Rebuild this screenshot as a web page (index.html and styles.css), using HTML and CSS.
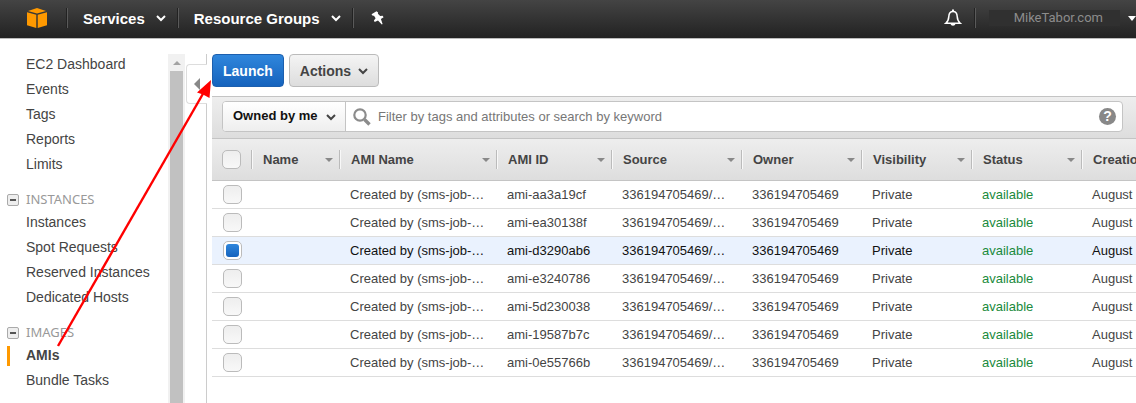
FILE: index.html
```
<!DOCTYPE html>
<html lang="en">
<head>
    <meta charset="UTF-8">
    <meta name="viewport" content="width=device-width, initial-scale=1.0">
    <title>EC2 Management Console</title>
    <link rel="stylesheet" href="styles.css">
</head>
<body>
    <svg class="sprites" aria-hidden="true">
        <symbol id="chevron" viewBox="0 0 10 8">
            <path d="M1 2l4 4 4-4" fill="none" stroke="currentColor" stroke-width="2"/>
        </symbol>
    </svg>

    <!-- Top navigation -->
    <header class="topbar">
        <a href="#" class="logo" aria-label="Home">
            <svg width="20" height="20" viewBox="0 0 20 20">
                <g fill="#f90">
                    <path d="M10 0l9 3-9 2.400L1 3z"/>
                    <path d="M0 4.200l9.300 2.500V20L0 17.300z"/>
                    <path d="M20 4.200l-9.300 2.500V20l9.300-2.700z"/>
                </g>
            </svg>
        </a>
        <button class="nav-btn">Services <svg class="chevron"><use href="#chevron"/></svg></button>
        <button class="nav-btn">Resource Groups <svg class="chevron"><use href="#chevron"/></svg></button>
        <button class="nav-btn nav-pin" aria-label="Pin">
            <svg width="14" height="14" viewBox="0 0 14 14">
                <path d="M5.500.3L.5 3.300l1.200 1.500 1.300-.1 1.600 2.500-1.700 2.200.8 1.500 3.300-1.500 3.800 4 .8-.4-1.700-4.900 2.700-1.800-1-1.500-2.400.2-2.300-2.300.2-1.300z" fill="#fff"/>
            </svg>
        </button>
        <div class="nav-right">
            <button class="bell" aria-label="Notifications">
                <svg width="18" height="18" viewBox="0 0 18 18">
                    <path d="M9 2.500C5.800 2.500 4.900 5 4.800 7.600 4.700 10.800 3.600 12.600 1.800 14.200H16.200C14.400 12.600 13.300 10.800 13.200 7.600 13.100 5 12.200 2.500 9 2.500z" fill="none" stroke="#fff" stroke-width="1.500"/>
                    <path d="M8 .6h2v2H8zM6.500 14.500h5c-.3 3-4.700 3-5 0z" fill="#fff"/>
                </svg>
            </button>
            <button class="account"><span class="account-name">MikeTabor.com</span><span class="caret"></span></button>
        </div>
    </header>

    <div class="page">
        <!-- Sidebar -->
        <nav class="sidebar">
            <ul class="menu">
                <li><a href="#">EC2 Dashboard</a></li>
                <li><a href="#">Events</a></li>
                <li><a href="#">Tags</a></li>
                <li><a href="#">Reports</a></li>
                <li><a href="#">Limits</a></li>
            </ul>
            <h2 class="menu-title"><button class="toggle" aria-label="Collapse instances"></button>INSTANCES</h2>
            <ul class="menu">
                <li><a href="#">Instances</a></li>
                <li><a href="#">Spot Requests</a></li>
                <li><a href="#">Reserved Instances</a></li>
                <li><a href="#">Dedicated Hosts</a></li>
            </ul>
            <h2 class="menu-title"><button class="toggle" aria-label="Collapse images"></button>IMAGES</h2>
            <ul class="menu">
                <li class="active"><a href="#">AMIs</a></li>
                <li><a href="#">Bundle Tasks</a></li>
            </ul>
        </nav>
        <div class="scrollbar"><span class="scroll-up"></span><span class="scroll-thumb"></span></div>
        <div class="splitter"><button class="collapse" aria-label="Hide sidebar"></button></div>

        <main class="content">
            <div class="actions">
                <button class="btn btn-primary">Launch</button>
                <button class="btn">Actions <svg class="chevron"><use href="#chevron"/></svg></button>
            </div>

            <div class="filter-bar">
                <div class="filter">
                    <div class="owner">
                        <select aria-label="Owner filter">
                            <option>Owned by me</option>
                        </select>
                        <svg class="chevron"><use href="#chevron"/></svg>
                    </div>
                    <label class="search">
                        <svg width="18" height="18" viewBox="0 0 18 18" fill="none" stroke="#8c8c8c">
                            <circle cx="7" cy="7" r="5.700" stroke-width="2.200"/>
                            <path d="M11.500 11.500l5 5" stroke-width="3.400"/>
                        </svg>
                        <input type="text" aria-label="Filter" placeholder="Filter by tags and attributes or search by keyword">
                    </label>
                    <button class="help" aria-label="Help">?</button>
                </div>
            </div>

            <table class="ami-table">
                <colgroup>
                    <col class="col-check">
                    <col class="col-name">
                    <col class="col-ami">
                    <col class="col-id">
                    <col class="col-source">
                    <col class="col-owner">
                    <col class="col-visibility">
                    <col class="col-status">
                    <col>
                </colgroup>
                <thead>
                    <tr>
                        <th><input type="checkbox" aria-label="Select all"></th>
                        <th><div class="th">Name<span class="sort"></span></div></th>
                        <th><div class="th">AMI Name<span class="sort"></span></div></th>
                        <th><div class="th">AMI ID<span class="sort"></span></div></th>
                        <th><div class="th">Source<span class="sort"></span></div></th>
                        <th><div class="th">Owner<span class="sort"></span></div></th>
                        <th><div class="th">Visibility<span class="sort"></span></div></th>
                        <th><div class="th">Status<span class="sort"></span></div></th>
                        <th><div class="th">Creation</div></th>
                    </tr>
                </thead>
                <tbody>
                    <tr>
                        <td><input type="checkbox" aria-label="Select ami-aa3a19cf"></td>
                        <td></td>
                        <td>Created by (sms-job-…</td>
                        <td>ami-aa3a19cf</td>
                        <td>336194705469/…</td>
                        <td>336194705469</td>
                        <td>Private</td>
                        <td class="available">available</td>
                        <td>August</td>
                    </tr>
                    <tr>
                        <td><input type="checkbox" aria-label="Select ami-ea30138f"></td>
                        <td></td>
                        <td>Created by (sms-job-…</td>
                        <td>ami-ea30138f</td>
                        <td>336194705469/…</td>
                        <td>336194705469</td>
                        <td>Private</td>
                        <td class="available">available</td>
                        <td>August</td>
                    </tr>
                    <tr class="selected">
                        <td><input type="checkbox" aria-label="Select ami-d3290ab6" checked></td>
                        <td></td>
                        <td>Created by (sms-job-…</td>
                        <td>ami-d3290ab6</td>
                        <td>336194705469/…</td>
                        <td>336194705469</td>
                        <td>Private</td>
                        <td class="available">available</td>
                        <td>August</td>
                    </tr>
                    <tr>
                        <td><input type="checkbox" aria-label="Select ami-e3240786"></td>
                        <td></td>
                        <td>Created by (sms-job-…</td>
                        <td>ami-e3240786</td>
                        <td>336194705469/…</td>
                        <td>336194705469</td>
                        <td>Private</td>
                        <td class="available">available</td>
                        <td>August</td>
                    </tr>
                    <tr>
                        <td><input type="checkbox" aria-label="Select ami-5d230038"></td>
                        <td></td>
                        <td>Created by (sms-job-…</td>
                        <td>ami-5d230038</td>
                        <td>336194705469/…</td>
                        <td>336194705469</td>
                        <td>Private</td>
                        <td class="available">available</td>
                        <td>August</td>
                    </tr>
                    <tr>
                        <td><input type="checkbox" aria-label="Select ami-19587b7c"></td>
                        <td></td>
                        <td>Created by (sms-job-…</td>
                        <td>ami-19587b7c</td>
                        <td>336194705469/…</td>
                        <td>336194705469</td>
                        <td>Private</td>
                        <td class="available">available</td>
                        <td>August</td>
                    </tr>
                    <tr>
                        <td><input type="checkbox" aria-label="Select ami-0e55766b"></td>
                        <td></td>
                        <td>Created by (sms-job-…</td>
                        <td>ami-0e55766b</td>
                        <td>336194705469/…</td>
                        <td>336194705469</td>
                        <td>Private</td>
                        <td class="available">available</td>
                        <td>August</td>
                    </tr>
                </tbody>
            </table>
        </main>
    </div>

    <!-- Arrow from AMIs to the Launch button -->
    <svg class="pointer" width="220" height="360" viewBox="0 0 220 360" aria-hidden="true">
        <path d="M58 346L204 92" stroke="#f00" stroke-width="2.400"/>
        <path d="M211 80l-14 12.500 6 2 6.500 3.500z" fill="#f00"/>
    </svg>
</body>
</html>
```
FILE: styles.css
```
* {
    box-sizing: border-box;
}

body {
    margin: 0;
    min-height: 100vh;
    display: flex;
    flex-direction: column;
    position: relative;
    overflow: hidden;
    font-family: "Liberation Sans", Arial, sans-serif;
    font-size: 13px;
    color: #444;
    background-color: #fff;
}

button,
input,
select {
    font-family: inherit;
    font-size: inherit;
    color: inherit;
    margin: 0;
    padding: 0;
}

button {
    border: none;
    background: none;
    cursor: pointer;
}

a {
    color: inherit;
    text-decoration: none;
}

.sprites {
    position: absolute;
    width: 0;
    height: 0;
}

.chevron {
    width: 10px;
    height: 8px;
}

/* Top bar */
.topbar {
    display: flex;
    align-items: center;
    height: 39px;
    padding-left: 27px;
    background: linear-gradient(#444, #222);
    border-bottom: 1px solid #bbb;
}

.logo {
    display: flex;
    width: 40px;
    margin-bottom: 2px;
}

.nav-btn {
    display: flex;
    align-items: center;
    justify-content: space-between;
    gap: 11px;
    height: 20px;
    padding: 0 12px 0 15px;
    margin-bottom: 2px;
    border-left: 1px solid #5a5a5a;
    box-shadow: -1px 0 #222;
    font-size: 15px;
    font-weight: bold;
    color: #fff;
}

.nav-pin {
    padding: 0 17px;
}

.nav-right {
    display: flex;
    align-items: center;
    margin-left: auto;
    margin-bottom: 2px;
}

.bell {
    display: flex;
    padding-right: 13px;
}

.account {
    display: flex;
    align-items: center;
    gap: 8px;
    height: 20px;
    padding-left: 13px;
    border-left: 1px solid #5a5a5a;
    box-shadow: -1px 0 #222;
}

.account-name {
    padding: 0 17px 0 25px;
    background-color: #303030;
    font-family: Roboto, sans-serif;
    font-size: 13px;
    line-height: 16px;
    color: #8c8c8c;
}

.caret {
    border: 4px solid transparent;
    border-top: 5px solid #fff;
    border-bottom: none;
}

/* Sidebar */
.page {
    flex: 1;
    display: flex;
}

.sidebar {
    width: 168px;
    flex-shrink: 0;
    padding-top: 13px;
}

.menu {
    list-style: none;
    margin: 0;
    padding: 0;
    font-size: 14px;
    line-height: 25px;
}

.menu a {
    display: block;
    padding-left: 26px;
}

.menu .active {
    font-weight: bold;
    background: linear-gradient(#f90, #f90) 7px center / 3px 20px no-repeat;
}

.menu-title {
    display: flex;
    align-items: center;
    gap: 7px;
    margin: 12px 0 0;
    padding-left: 7px;
    font-family: "Noto Sans", sans-serif;
    font-size: 13px;
    font-weight: normal;
    line-height: 21px;
    color: #999;
}

.toggle {
    width: 12px;
    height: 12px;
    border: 1px solid #aaa;
    border-radius: 2px;
    background: linear-gradient(#555, #555) center / 6px 2px no-repeat, #eee;
}

.scrollbar {
    width: 17px;
    margin-top: 15px;
    display: flex;
    flex-direction: column;
    align-items: center;
    background-color: #f1f1f1;
}

.scroll-up {
    margin: 7px 0 6px;
    border: 4px solid transparent;
    border-bottom: 4px solid #a3a3a3;
    border-top: none;
}

.scroll-thumb {
    flex: 1;
    width: 13px;
    background-color: #c1c1c1;
}

.splitter {
    width: 22px;
    margin-top: 15px;
    border-right: 1px solid #ccc;
    padding: 10px 0 0 1px;
}

.collapse {
    display: flex;
    align-items: center;
    width: 21px;
    height: 40px;
    padding-left: 7px;
    background-color: #fff;
    border: 1px solid #ddd;
    border-right: none;
    border-radius: 4px 0 0 4px;
}

.collapse::before {
    content: "";
    border: 6px solid transparent;
    border-right: 6px solid #888;
    border-left: none;
}

/* Content */
.content {
    flex: 1;
    min-width: 0;
    padding: 15px 0 0 5px;
    overflow: hidden;
}

.actions {
    display: flex;
    gap: 5px;
    margin-bottom: 9px;
}

.btn {
    display: flex;
    align-items: center;
    gap: 7px;
    height: 33px;
    padding: 0 10px;
    border: 1px solid #bbb;
    border-radius: 4px;
    background: linear-gradient(#f4f4f4, #ddd);
    font-size: 14px;
    font-weight: bold;
}

.btn-primary {
    border-color: #1c5fae;
    background: linear-gradient(#2f86dc, #1563bd);
    color: #fff;
}

.filter-bar {
    padding: 4px 13px 6px 10px;
    border-top: 1px solid #c4c4c4;
    background: linear-gradient(#eee, #ddd);
}

.filter {
    display: flex;
    height: 31px;
    border: 1px solid #c4c4c4;
    border-radius: 4px;
    background-color: #fff;
    overflow: hidden;
}

.owner {
    position: relative;
    width: 123px;
    border-right: 1px solid #c4c4c4;
    background: linear-gradient(#fff, #eee);
}

.owner select {
    appearance: none;
    width: 100%;
    height: 27px;
    padding-left: 10px;
    border: none;
    background: none;
    font-weight: bold;
    color: #111;
}

.owner .chevron {
    position: absolute;
    right: 9px;
    top: 11px;
    pointer-events: none;
}

.search {
    flex: 1;
    display: flex;
    align-items: center;
    gap: 7px;
    padding-left: 7px;
}

.search input {
    flex: 1;
    border: none;
    outline: none;
}

.search input::placeholder {
    color: #777;
}

.help {
    align-self: center;
    width: 17px;
    height: 17px;
    margin-right: 6px;
    border-radius: 50%;
    background-color: #888;
    color: #fff;
    font-size: 14px;
    font-weight: bold;
    line-height: 17px;
}

/* AMI table */
.ami-table {
    width: 100%;
    table-layout: fixed;
    border-collapse: separate;
    border-spacing: 0;
}

.col-check {
    width: 39px;
}

.col-name {
    width: 88px;
}

.col-ami {
    width: 157px;
}

.col-id {
    width: 115px;
}

.col-source {
    width: 130px;
}

.col-owner {
    width: 120px;
}

.col-visibility,
.col-status {
    width: 110px;
}

.ami-table thead tr {
    background: linear-gradient(#eee, #ddd);
}

.ami-table th {
    height: 43px;
    padding: 0;
    border-top: 1px solid #c4c4c4;
    border-bottom: 1px solid #c4c4c4;
    text-align: left;
    white-space: nowrap;
}

.th {
    display: flex;
    align-items: center;
    justify-content: space-between;
    height: 19px;
    padding: 0 6px 0 11px;
    border-left: 1px solid #bbb;
    box-shadow: inset 1px 0 #f8f8f8;
}

.sort {
    border: 4px solid transparent;
    border-top: 4px solid #888;
    border-bottom: none;
}

.ami-table td {
    height: 28px;
    padding: 0 0 0 11px;
    border-bottom: 1px solid #ddd;
    white-space: nowrap;
}

.ami-table th:first-child {
    padding-left: 10px;
}

.ami-table input {
    appearance: none;
    display: block;
    width: 19px;
    height: 19px;
    border: 1px solid #bbb;
    border-radius: 5px;
    background: linear-gradient(#eee, #f8f8f8);
}

.ami-table input:checked {
    padding: 2px;
    background: #fff;
}

.ami-table input:checked::before {
    content: "";
    display: block;
    width: 13px;
    height: 13px;
    border-radius: 3px;
    background: linear-gradient(#2f86dc, #1563bd);
}

.selected {
    background-color: #eaf2fe;
    color: #111;
}

.ami-table .available {
    color: #1a8a3c;
}

/* Annotation arrow */
.pointer {
    position: absolute;
    left: 0;
    top: 0;
    pointer-events: none;
}
```
